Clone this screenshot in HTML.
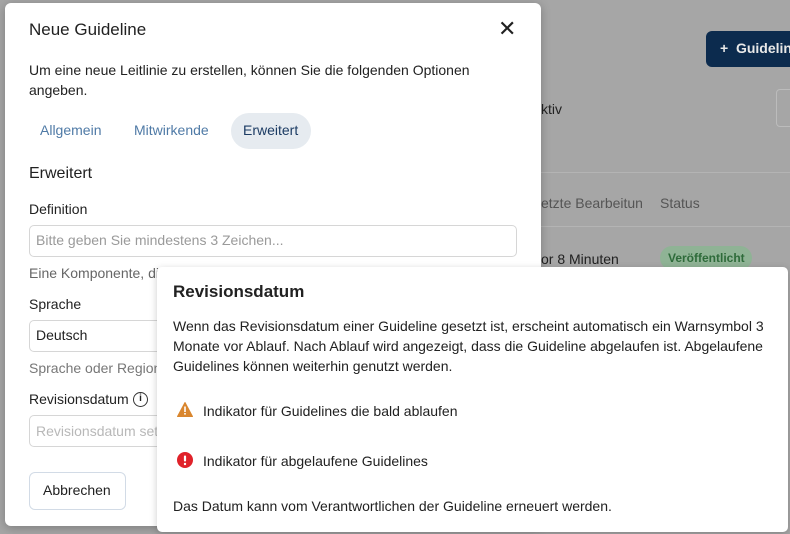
<!DOCTYPE html>
<html><head><meta charset="utf-8"><style>
*{box-sizing:border-box;margin:0;padding:0}
body{width:790px;height:534px;overflow:hidden;background:#a6a6a6;font-family:"Liberation Sans",sans-serif;color:#212121;position:relative}
.a{position:absolute}
.dlg{left:5px;top:3px;width:536px;height:523px;background:#fff;border-radius:6px;box-shadow:0 2px 10px rgba(0,0,0,.25)}
.tip{left:157px;top:267px;width:631px;height:265px;background:#fff;border-radius:5px;box-shadow:0 2px 8px rgba(0,0,0,.2)}
.t{font-size:14px;white-space:nowrap}
.inp{border:1px solid #d6d6d6;border-radius:5px;height:32px;background:#fff}
</style></head><body>
<!-- background page -->
<div class="a" style="left:706px;top:31px;width:90px;height:36px;background:#0c2b4e;border-radius:6px;color:#e8e8e8;font-size:14px;font-weight:bold;padding:9px 0 0 14px">+&nbsp; Guidelin</div>
<div class="a t" style="left:541px;top:101px;color:#222">ktiv</div>
<div class="a" style="left:776px;top:89px;width:20px;height:38px;border:1px solid #bcbcbc;border-radius:4px"></div>
<div class="a" style="left:541px;top:172px;width:249px;height:1px;background:#b4b4b4"></div>
<div class="a t" style="left:541px;top:195px;color:#555">etzte Bearbeitun</div>
<div class="a t" style="left:660px;top:195px;color:#555">Status</div>
<div class="a" style="left:541px;top:226px;width:249px;height:1px;background:#b4b4b4"></div>
<div class="a t" style="left:541px;top:251px">or 8 Minuten</div>
<div class="a" style="left:660px;top:246px;width:92px;height:24px;background:#8fb395;border-radius:12px;color:#2e6b3a;font-size:12px;font-weight:bold;padding:5px 0 0 8px">Veröffentlicht</div>
<!-- dialog -->
<div class="a dlg"></div>
<div class="a" style="left:29px;top:20px;font-size:17px;font-weight:500">Neue Guideline</div>
<div class="a" style="left:498px;top:17px;font-size:22px;line-height:24px">✕</div>
<div class="a" style="left:29px;top:60px;font-size:14px;line-height:20px;width:450px">Um eine neue Leitlinie zu erstellen, können Sie die folgenden Optionen angeben.</div>
<div class="a t" style="left:40px;top:122px;color:#4f7aa6">Allgemein</div>
<div class="a t" style="left:134px;top:122px;color:#4f7aa6">Mitwirkende</div>
<div class="a" style="left:231px;top:113px;width:80px;height:36px;background:#e6ebf0;border-radius:18px"></div>
<div class="a t" style="left:243px;top:122px;color:#1b3b63">Erweitert</div>
<div class="a" style="left:29px;top:165px;font-size:16px">Erweitert</div>
<div class="a t" style="left:29px;top:201px;font-weight:500">Definition</div>
<div class="a inp" style="left:29px;top:225px;width:488px"></div>
<div class="a t" style="left:36px;top:232px;color:#9a9a9a">Bitte geben Sie mindestens 3 Zeichen...</div>
<div class="a t" style="left:29px;top:265px;color:#666">Eine Komponente, die</div>
<div class="a t" style="left:29px;top:296px;font-weight:500">Sprache</div>
<div class="a inp" style="left:29px;top:320px;width:200px"></div>
<div class="a t" style="left:36px;top:327px">Deutsch</div>
<div class="a t" style="left:29px;top:360px;color:#777">Sprache oder Region</div>
<div class="a t" style="left:29px;top:391px;font-weight:500">Revisionsdatum</div>
<div class="a" style="left:133px;top:392px;width:15px;height:15px;border:1.5px solid #333;border-radius:50%;font-size:10px;text-align:center;line-height:12px;font-weight:bold">i</div>
<div class="a inp" style="left:29px;top:415px;width:200px"></div>
<div class="a t" style="left:36px;top:423px;color:#b8b8b8">Revisionsdatum setzen</div>
<div class="a" style="left:29px;top:472px;width:97px;height:38px;border:1px solid #d2dbe6;border-radius:6px;background:#fff"></div>
<div class="a t" style="left:43px;top:482px;font-weight:500">Abbrechen</div>
<!-- tooltip -->
<div class="a tip"></div>
<div class="a" style="left:173px;top:282px;font-size:17px;font-weight:bold">Revisionsdatum</div>
<div class="a" style="left:173px;top:316px;font-size:14px;line-height:20px;width:600px">Wenn das Revisionsdatum einer Guideline gesetzt ist, erscheint automatisch ein Warnsymbol 3 Monate vor Ablauf. Nach Ablauf wird angezeigt, dass die Guideline abgelaufen ist. Abgelaufene Guidelines können weiterhin genutzt werden.</div>
<svg class="a" style="left:177px;top:402px" width="16" height="15" viewBox="0 0 16 15"><path d="M8 0.5 L15.5 14.5 H0.5 Z" fill="#d9862e" stroke="#d9862e" stroke-linejoin="round"/><rect x="7.2" y="4.5" width="1.6" height="5.5" fill="#fff"/><rect x="7.2" y="11" width="1.6" height="1.6" fill="#fff"/></svg>
<div class="a t" style="left:203px;top:403px">Indikator für Guidelines die bald ablaufen</div>
<svg class="a" style="left:177px;top:452px" width="16" height="16" viewBox="0 0 16 16"><circle cx="8" cy="8" r="8" fill="#e0222a"/><rect x="6.9" y="3.5" width="2.2" height="6" rx="1" fill="#fff"/><circle cx="8" cy="12" r="1.2" fill="#fff"/></svg>
<div class="a t" style="left:203px;top:453px">Indikator für abgelaufene Guidelines</div>
<div class="a t" style="left:173px;top:498px">Das Datum kann vom Verantwortlichen der Guideline erneuert werden.</div>
</body></html>
